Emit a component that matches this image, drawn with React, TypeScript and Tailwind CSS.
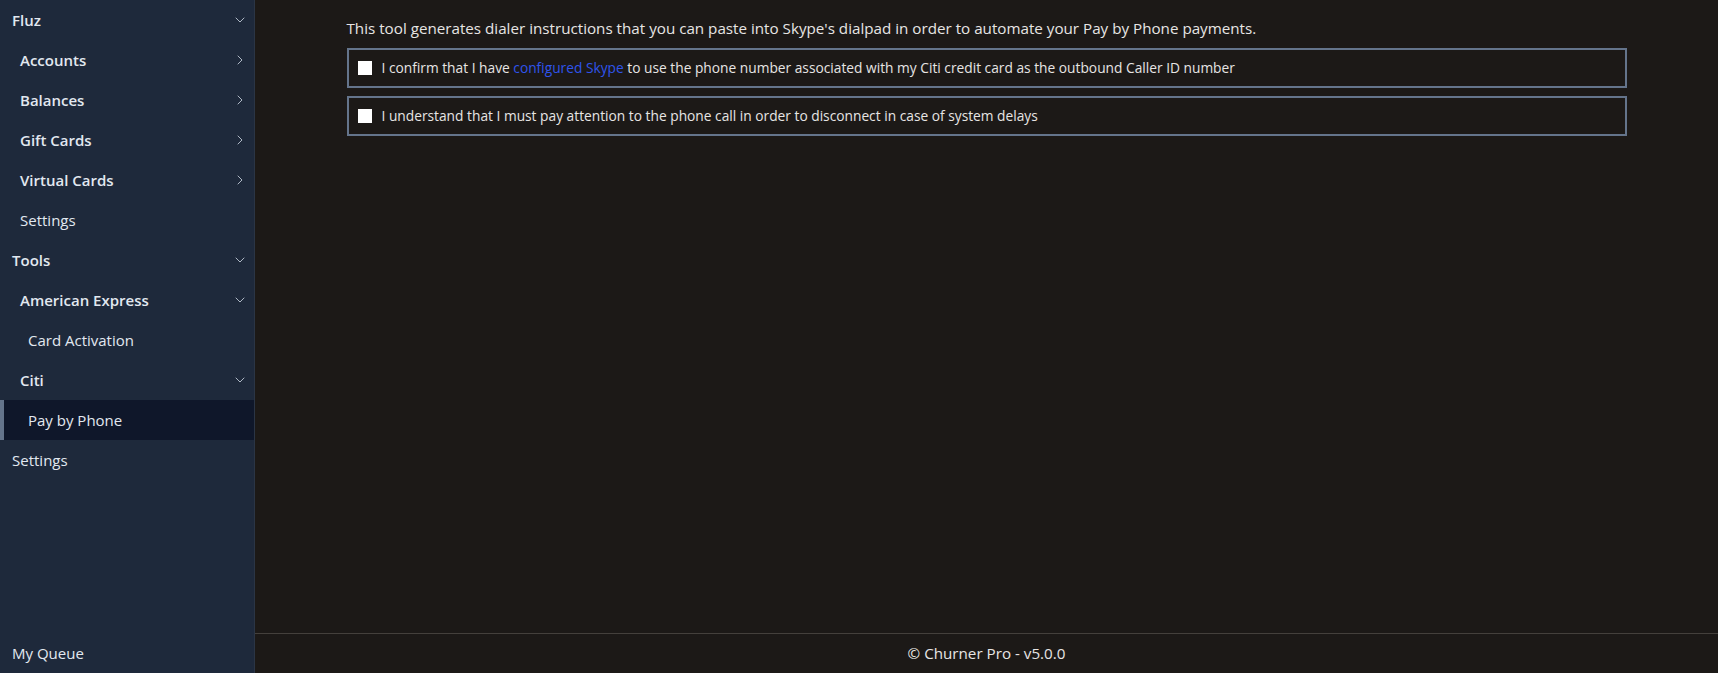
import React from "react";
import { ChevronDown, ChevronRight } from "lucide-react";

const font = { fontFamily: '"Segoe UI", "Open Sans", "Noto Sans", sans-serif' };

type Item = {
  label: string;
  level: 0 | 1 | 2;
  bold?: boolean;
  chevron?: "down" | "right";
  active?: boolean;
};

const items: Item[] = [
  { label: "Fluz", level: 0, bold: true, chevron: "down" },
  { label: "Accounts", level: 1, bold: true, chevron: "right" },
  { label: "Balances", level: 1, bold: true, chevron: "right" },
  { label: "Gift Cards", level: 1, bold: true, chevron: "right" },
  { label: "Virtual Cards", level: 1, bold: true, chevron: "right" },
  { label: "Settings", level: 1 },
  { label: "Tools", level: 0, bold: true, chevron: "down" },
  { label: "American Express", level: 1, bold: true, chevron: "down" },
  { label: "Card Activation", level: 2 },
  { label: "Citi", level: 1, bold: true, chevron: "down" },
  { label: "Pay by Phone", level: 2, active: true },
  { label: "Settings", level: 0 },
];

function NavRow({ item }: { item: Item }) {
  const pad = item.level === 0 ? "pl-3" : item.level === 1 ? "pl-5" : "pl-7";
  return (
    <div
      className={
        "flex h-10 items-center justify-between pr-1.5 text-[15px] text-[#e2e8f0] " +
        pad +
        (item.bold ? " font-semibold" : "") +
        (item.active ? " border-l-4 border-[#64748b] bg-[#0f172a] !pl-6" : "")
      }
    >
      <span>{item.label}</span>
      {item.chevron === "down" && <ChevronDown className="h-4 w-4 text-[#cbd5e1]" strokeWidth={1.25} />}
      {item.chevron === "right" && <ChevronRight className="h-4 w-4 text-[#cbd5e1]" strokeWidth={1.25} />}
    </div>
  );
}

function Agreement({ children }: { children: React.ReactNode }) {
  return (
    <label className="flex h-10 items-center gap-2.5 border-2 border-[#64748b] px-[9px] text-[13.75px] text-[#e7e5e4]">
      <span className="h-[14px] w-[14px] shrink-0 bg-white" />
      <span>{children}</span>
    </label>
  );
}

export default function App() {
  return (
    <div className="flex h-[673px] w-full overflow-hidden bg-[#1c1917]" style={font}>
      <aside className="flex w-[255px] shrink-0 flex-col justify-between border-r border-[#2b3545] bg-[#1e293b]">
        <nav>
          {items.map((it, i) => (
            <NavRow key={i} item={it} />
          ))}
        </nav>
        <div className="flex h-10 items-center pl-3 text-[15px] text-[#e2e8f0]">My Queue</div>
      </aside>
      <div className="flex min-w-0 flex-1 flex-col">
        <main className="flex-1 px-4 pt-4">
          <div className="mx-auto max-w-[1280px]">
            <p className="mb-2 text-[15.2px] leading-6 text-[#e7e5e4]">
              This tool generates dialer instructions that you can paste into Skype's dialpad in order to automate your Pay by Phone payments.
            </p>
            <div className="flex flex-col gap-2">
              <Agreement>
                I confirm that I have <a className="text-[#2f54eb]">configured Skype</a> to use the phone number associated with my Citi credit card as the outbound Caller ID number
              </Agreement>
              <Agreement>
                I understand that I must pay attention to the phone call in order to disconnect in case of system delays
              </Agreement>
            </div>
          </div>
        </main>
        <footer className="flex h-10 items-center justify-center border-t border-[#44403c] text-[15.2px] text-[#e7e5e4]">
          © Churner Pro - v5.0.0
        </footer>
      </div>
    </div>
  );
}
